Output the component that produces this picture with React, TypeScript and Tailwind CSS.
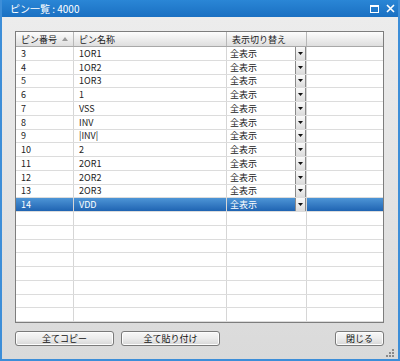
import React from 'react';

type Pin = { no: number; name: string };

const pins: Pin[] = [
  { no: 3, name: '1OR1' },
  { no: 4, name: '1OR2' },
  { no: 5, name: '1OR3' },
  { no: 6, name: '1' },
  { no: 7, name: 'VSS' },
  { no: 8, name: 'INV' },
  { no: 9, name: '|INV|' },
  { no: 10, name: '2' },
  { no: 11, name: '2OR1' },
  { no: 12, name: '2OR2' },
  { no: 13, name: '2OR3' },
  { no: 14, name: 'VDD' },
];

const font = { fontFamily: '"Noto Sans CJK JP", "Noto Sans", sans-serif' };

function DropButton() {
  return (
    <div className="flex h-full w-[11px] items-center justify-center border-x border-[#8a8a8a] bg-gradient-to-b from-[#fafafa] to-[#dcdcdc]">
      <svg width="5" height="3" viewBox="0 0 5 3">
        <path d="M0 0h5L2.5 3z" fill="#111" />
      </svg>
    </div>
  );
}

function Row({ pin, selected }: { pin?: Pin; selected?: boolean }) {
  const base = selected
    ? 'bg-gradient-to-b from-[#4d95d6] to-[#1f64b2] text-white'
    : 'bg-white text-[#222]';
  return (
    <div className={`flex h-[13.75px] shrink-0 border-b border-[#dcdcdc] text-[9px] leading-none ${base}`}>
      <div className="flex w-[58px] items-center border-r border-[#d6d6d6] pl-[5px]">{pin?.no}</div>
      <div className="flex w-[153px] items-center border-r border-[#d6d6d6] pl-[5px]">{pin?.name}</div>
      <div className="flex w-[80px] items-center justify-between border-r border-[#d6d6d6] pl-[3px]">
        <span>{pin ? '全表示' : ''}</span>
        {pin && <DropButton />}
      </div>
      <div className="flex-1" />
    </div>
  );
}

function Btn({ label, w }: { label: string; w: string }) {
  return (
    <button
      className={`flex h-[15px] ${w} items-center justify-center rounded-[3px] border border-[#7a7a7a] bg-gradient-to-b from-[#f8f8f8] via-[#ececec] to-[#d6d6d6] text-[9px] leading-none text-[#111] shadow-[inset_0_0_0_1px_#fdfdfd]`}
    >
      {label}
    </button>
  );
}

export default function App() {
  const empties = Array.from({ length: 8 });
  return (
    <div style={font} className="flex h-[361px] w-[400px] flex-col overflow-hidden border-x-2 border-b-2 border-[#3d8ed8] bg-gradient-to-b from-[#ededed] to-[#dadada]">
      {/* Title bar */}
      <div className="-mx-[2px] flex h-[17px] shrink-0 items-center justify-between bg-gradient-to-b from-[#2a86d6] to-[#1a70c2] pl-[10px] pr-[5px]">
        <span className="text-[10px] leading-none text-white">ピン一覧 : 4000</span>
        <div className="flex items-center gap-[7px]">
          <svg width="9" height="8" viewBox="0 0 9 8">
            <rect x="0.5" y="0.5" width="8" height="7" fill="none" stroke="#fff" />
            <rect x="0" y="0" width="9" height="2" fill="#fff" />
          </svg>
          <svg width="9" height="9" viewBox="0 0 9 9">
            <path d="M1 1l7 7M8 1l-7 7" stroke="#fff" strokeWidth="1.6" />
          </svg>
        </div>
      </div>

      {/* Body */}
      <div className="flex flex-1 flex-col pl-[13px] pr-[14px] pt-[14px]">
        <div className="flex h-[292px] flex-col overflow-hidden border border-[#7d7d7d] bg-white">
          {/* Header */}
          <div className="flex h-[15px] shrink-0 border-b border-[#a8a8a8] bg-gradient-to-b from-[#fdfdfd] to-[#dedede] text-[9px] leading-none text-[#222]">
            <div className="flex w-[58px] items-center gap-[5px] border-r border-[#b8b8b8] pl-[5px]">
              ピン番号
              <svg width="6" height="4" viewBox="0 0 6 4">
                <path d="M0 4h6L3 0z" fill="#9a9a9a" />
              </svg>
            </div>
            <div className="flex w-[153px] items-center border-r border-[#b8b8b8] pl-[5px]">ピン名称</div>
            <div className="flex w-[80px] items-center border-r border-[#b8b8b8] pl-[5px]">表示切り替え</div>
            <div className="flex-1" />
          </div>
          {pins.map((p) => (
            <Row key={p.no} pin={p} selected={p.no === 14} />
          ))}
          {empties.map((_, i) => (
            <Row key={`e${i}`} />
          ))}
        </div>

        {/* Buttons */}
        <div className="mt-[8px] flex items-center">
          <Btn label="全てコピー" w="w-[99px]" />
          <div className="ml-[7px]">
            <Btn label="全て貼り付け" w="w-[99px]" />
          </div>
          <div className="ml-auto">
            <Btn label="閉じる" w="w-[49px]" />
          </div>
        </div>
        <div className="mt-auto flex justify-end pb-[1px] pr-[-10px]">
          <svg width="9" height="9" viewBox="0 0 9 9" className="-mr-[11px]">
            <g fill="#8a8a8a">
              <rect x="6" y="0" width="2" height="2" />
              <rect x="3" y="3" width="2" height="2" />
              <rect x="6" y="3" width="2" height="2" />
              <rect x="0" y="6" width="2" height="2" />
              <rect x="3" y="6" width="2" height="2" />
              <rect x="6" y="6" width="2" height="2" />
            </g>
          </svg>
        </div>
      </div>
    </div>
  );
}
